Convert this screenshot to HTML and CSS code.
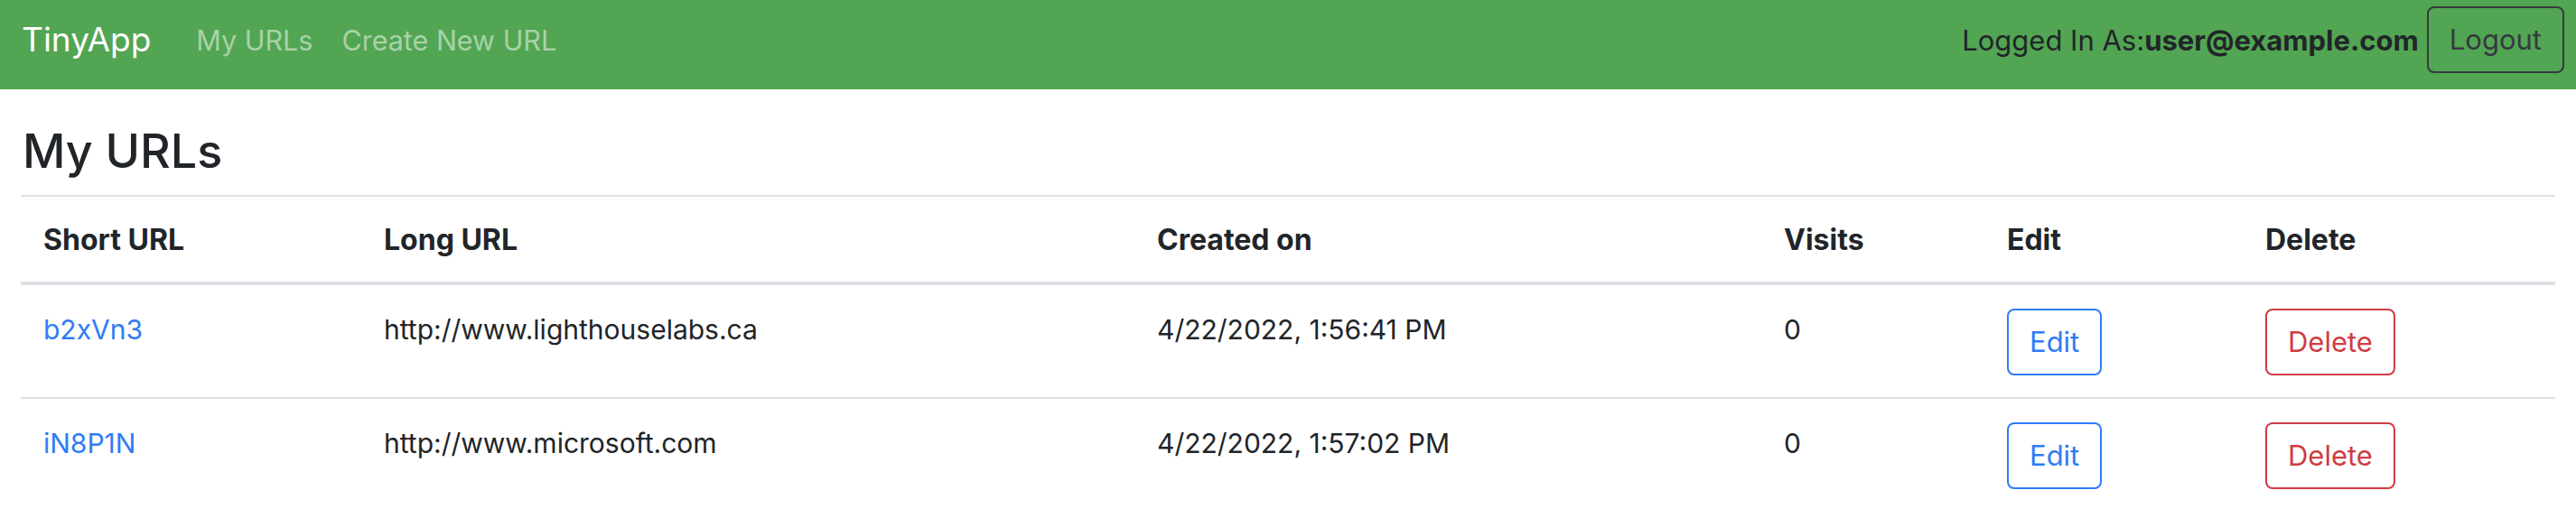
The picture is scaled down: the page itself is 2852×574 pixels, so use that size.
FILE: index.html
```html
<!DOCTYPE html>
<html lang="en">
<head>
<meta charset="utf-8">
<title>TinyApp</title>
<link rel="stylesheet" href="styles.css">
</head>
<body>
<nav class="navbar">
  <a class="brand" href="#">TinyApp</a>
  <ul class="nav-links">
    <li><a href="#">My URLs</a></li>
    <li><a href="#">Create New URL</a></li>
  </ul>
  <div class="user">
    <span class="user-label">Logged In As:<b>user@example.com</b></span>
    <button class="btn btn-dark">Logout</button>
  </div>
</nav>
<main class="container">
  <h1 class="title">My URLs</h1>
  <table class="table">
    <colgroup>
      <col class="c-short"><col class="c-long"><col class="c-created"><col class="c-visits"><col class="c-edit"><col class="c-delete">
    </colgroup>
    <thead>
      <tr><th>Short URL</th><th>Long URL</th><th>Created on</th><th>Visits</th><th>Edit</th><th>Delete</th></tr>
    </thead>
    <tbody>
      <tr>
        <td><a href="#">b2xVn3</a></td>
        <td>http://www.lighthouselabs.ca</td>
        <td>4/22/2022, 1:56:41 PM</td>
        <td>0</td>
        <td><button class="btn btn-blue">Edit</button></td>
        <td><button class="btn btn-red">Delete</button></td>
      </tr>
      <tr>
        <td><a href="#">iN8P1N</a></td>
        <td>http://www.microsoft.com</td>
        <td>4/22/2022, 1:57:02 PM</td>
        <td>0</td>
        <td><button class="btn btn-blue">Edit</button></td>
        <td><button class="btn btn-red">Delete</button></td>
      </tr>
    </tbody>
  </table>
</main>
</body>
</html>
```
FILE: styles.css
```css
* { box-sizing: border-box; }
html, body { margin: 0; padding: 0; background: #fff; }
body {
  font-family: "Inter", "Liberation Sans", sans-serif;
  color: #212529;
  font-size: 30px;
}
a { text-decoration: none; }

.navbar {
  display: flex;
  align-items: center;
  background: #52a552;
  padding: 7px 13px 18px 24px;
  height: 99px;
}
.brand {
  color: #fff;
  font-size: 37px;
  line-height: 74px;
}
.nav-links {
  display: flex;
  list-style: none;
  margin: 0 0 0 50px;
  padding: 0;
  gap: 32px;
}
.nav-links a {
  color: rgba(255, 255, 255, 0.5);
  font-size: 30.5px;
}
.user {
  margin-left: auto;
  display: flex;
  align-items: center;
}
.user-label {
  font-size: 31px;
  color: #212529;
}
.user-label b { font-weight: 700; }

.btn {
  font-family: inherit;
  font-size: 31px;
  line-height: 46px;
  padding: 12px 23px;
  border: 2px solid;
  border-radius: 8px;
  background: transparent;
  cursor: pointer;
}
.btn-dark { color: #343a40; border-color: #343a40; margin-left: 9px; }
.btn-blue { color: #2f7cf6; border-color: #2f7cf6; }
.btn-red { color: #cf3c43; border-color: #cf3c43; }

.container { padding: 0 23px; }
.title {
  font-size: 52px;
  font-weight: 500;
  line-height: 62px;
  margin: 38px 2px 17px;
}
.table {
  width: 100%;
  border-collapse: collapse;
}
.c-short { width: 377px; }
.c-long { width: 856px; }
.c-created { width: 694px; }
.c-visits { width: 247px; }
.c-edit { width: 286px; }
.table th, .table td {
  text-align: left;
  vertical-align: top;
  padding: 26px 25px 24px;
  line-height: 46px;
  border-top: 2px solid #dee2e6;
}
.table thead th {
  font-size: 32px;
  font-weight: 700;
  vertical-align: bottom;
  padding: 25px 25px 23px;
  border-bottom: 4px solid #dee2e6;
}
.table td a { color: #2f7cf6; }
```
